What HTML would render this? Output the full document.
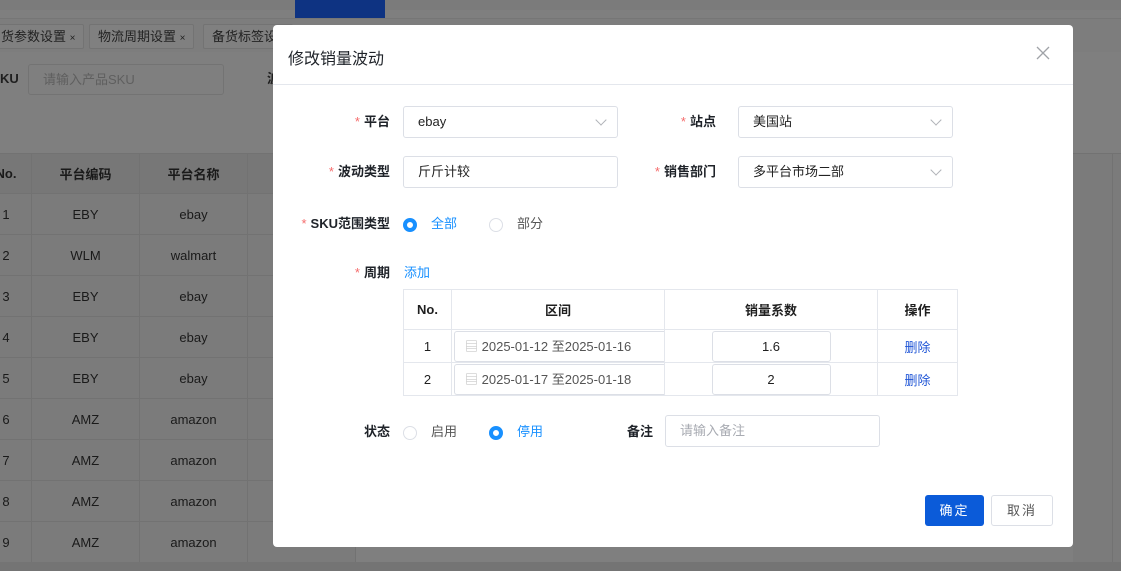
<!DOCTYPE html>
<html><head><meta charset="utf-8">
<style>
*{box-sizing:border-box;margin:0;padding:0}
body{width:1121px;height:571px;overflow:hidden;position:relative;background:#7f7f7f;font-family:"Liberation Sans","Noto Sans CJK SC",sans-serif;font-size:13px;color:#1f1f1f}
.a{position:absolute}
.bgtab{position:absolute;top:24px;height:25px;border:1px solid #737373;background:#808080;color:#222;font-size:13px;line-height:23px;padding:0 8px;border-radius:2px}
table.bg{position:absolute;left:-20px;top:153px;border-collapse:collapse;background:#7b7b7b}
table.bg td{border:1px solid #727272;height:41px;text-align:center;color:#1a1a1a;font-size:13px}
table.bg tr:first-child td{font-weight:bold;height:40px;background:#777}
.modal{position:absolute;left:273px;top:25px;width:800px;height:522px;background:#fff;border-radius:4px}
.lbl{position:absolute;text-align:right;font-weight:bold;font-size:13px;color:#1f2329;line-height:32px}
.lbl i{color:#f56c6c;font-style:normal;margin-right:4px;font-weight:normal}
.inp{position:absolute;height:32px;border:1px solid #dcdfe6;border-radius:3px;line-height:30px;padding-left:14px;font-size:13px;color:#222}
.arr{position:absolute;right:12px;top:9px;width:8px;height:8px;border-right:1px solid #b0b3b8;border-bottom:1px solid #b0b3b8;transform:rotate(45deg)}
.radio{position:absolute;width:14px;height:14px;border-radius:50%;border:1px solid #dcdfe6}
.radio.on{border:4px solid #1890ff;background:#fff}
.rt{position:absolute;font-size:13px;line-height:16px}
table.inner{position:absolute;left:403px;top:289px;border-collapse:collapse;width:555px}
table.inner td{border:1px solid #e4e7ed;text-align:center;font-size:13px}
</style></head><body>
<div class="a" style="left:0;top:0;width:1121px;height:10px;background:#7b7b7b"></div>
<div class="a" style="left:295px;top:0;width:90px;height:18px;background:#0e3382"></div>
<div class="a" style="left:0;top:18px;width:1121px;height:34px;background:#7d7d7d;border-top:1px solid #767676"></div>
<div class="bgtab" style="left:-8px">货参数设置 <span style="font-size:10px">×</span></div>
<div class="bgtab" style="left:89px">物流周期设置 <span style="font-size:10px">×</span></div>
<div class="bgtab" style="left:203px;width:90px">备货标签设</div>
<div class="a" style="left:0;top:64px;font-weight:bold;line-height:30px">KU</div>
<div class="a" style="left:28px;top:64px;width:196px;height:31px;border:1px solid #737373;border-radius:3px;color:#5f5f5f;line-height:29px;padding-left:14px">请输入产品SKU</div>
<div class="a" style="left:267px;top:64px;font-weight:bold;line-height:30px">波</div>
<table class="bg">
<tr><td style="width:51px">No.</td><td style="width:108px">平台编码</td><td style="width:108px">平台名称</td><td style="width:108px"></td></tr>
<tr><td>1</td><td>EBY</td><td>ebay</td><td></td></tr>
<tr><td>2</td><td>WLM</td><td>walmart</td><td></td></tr>
<tr><td>3</td><td>EBY</td><td>ebay</td><td></td></tr>
<tr><td>4</td><td>EBY</td><td>ebay</td><td></td></tr>
<tr><td>5</td><td>EBY</td><td>ebay</td><td></td></tr>
<tr><td>6</td><td>AMZ</td><td>amazon</td><td></td></tr>
<tr><td>7</td><td>AMZ</td><td>amazon</td><td></td></tr>
<tr><td>8</td><td>AMZ</td><td>amazon</td><td></td></tr>
<tr><td>9</td><td>AMZ</td><td>amazon</td><td></td></tr>
</table>
<div class="a" style="left:1073px;top:153px;width:48px;height:410px;background:#7b7b7b;border-top:1px solid #727272"></div>
<div class="a" style="left:1112px;top:153px;width:1px;height:410px;background:#727272"></div>
<div class="a" style="left:0;top:562px;width:1121px;height:9px;background:#747474"></div>

<div class="modal">
<div class="a" style="left:15px;top:20px;font-size:16px;color:#1f2329">修改销量波动</div>
<div class="a" style="left:762px;top:20px;width:16px;height:16px">
<svg width="16" height="16"><path d="M2 2L14 14M14 2L2 14" stroke="#a0a3a8" stroke-width="1.3"/></svg></div>
<div class="a" style="left:0;top:59px;width:800px;height:1px;background:#e4e7ed"></div>

<div class="lbl" style="left:0;top:81px;width:117px"><i>*</i>平台</div>
<div class="inp" style="left:130px;top:81px;width:215px">ebay<span class="arr"></span></div>
<div class="lbl" style="left:300px;top:81px;width:143px"><i>*</i>站点</div>
<div class="inp" style="left:465px;top:81px;width:215px">美国站<span class="arr"></span></div>

<div class="lbl" style="left:0;top:131px;width:117px"><i>*</i>波动类型</div>
<div class="inp" style="left:130px;top:131px;width:215px">斤斤计较</div>
<div class="lbl" style="left:300px;top:131px;width:143px"><i>*</i>销售部门</div>
<div class="inp" style="left:465px;top:131px;width:215px">多平台市场二部<span class="arr"></span></div>

<div class="lbl" style="left:0;top:183px;width:117px"><i>*</i>SKU范围类型</div>
<div class="radio on" style="left:130px;top:193px"></div>
<div class="rt" style="left:158px;top:191px;color:#1890ff">全部</div>
<div class="radio" style="left:216px;top:193px"></div>
<div class="rt" style="left:244px;top:191px;color:#555">部分</div>

<div class="lbl" style="left:0;top:232px;width:117px"><i>*</i>周期</div>
<div class="rt" style="left:131px;top:240px;color:#1890ff">添加</div>

<div class="lbl" style="left:0;top:391px;width:117px">状态</div>
<div class="radio" style="left:130px;top:401px"></div>
<div class="rt" style="left:158px;top:399px;color:#555">启用</div>
<div class="radio on" style="left:216px;top:401px"></div>
<div class="rt" style="left:244px;top:399px;color:#1890ff">停用</div>
<div class="lbl" style="left:300px;top:391px;width:80px">备注</div>
<div class="inp" style="left:392px;top:390px;width:215px;color:#a8abb2">请输入备注</div>

<div class="a" style="left:652px;top:470px;width:59px;height:31px;background:#0b5bd9;border-radius:3px;color:#fff;text-align:center;line-height:31px;letter-spacing:2px">确定</div>
<div class="a" style="left:718px;top:470px;width:62px;height:31px;border:1px solid #dcdfe6;border-radius:3px;color:#555;text-align:center;line-height:29px;letter-spacing:2px">取消</div>
</div>

<table class="inner">
<tr style="height:40px;font-weight:bold"><td style="width:48px;font-weight:bold">No.</td><td style="width:213px;font-weight:bold">区间</td><td style="width:213px;font-weight:bold">销量系数</td><td style="font-weight:bold">操作</td></tr>
<tr style="height:33px"><td>1</td><td style="padding:0"><div style="margin:0 0 0 2px;height:31px;border:1px solid #dcdfe6;border-right:none;border-radius:3px 0 0 3px;text-align:left;padding-left:10px;line-height:29px;color:#555"><span style="color:#bbb">▤</span> 2025-01-12 至2025-01-16</div></td><td><div style="margin:0 auto;width:119px;height:31px;border:1px solid #dcdfe6;border-radius:3px;line-height:29px">1.6</div></td><td style="color:#1f55d6">删除</td></tr>
<tr style="height:33px"><td>2</td><td style="padding:0"><div style="margin:0 0 0 2px;height:31px;border:1px solid #dcdfe6;border-right:none;border-radius:3px 0 0 3px;text-align:left;padding-left:10px;line-height:29px;color:#555"><span style="color:#bbb">▤</span> 2025-01-17 至2025-01-18</div></td><td><div style="margin:0 auto;width:119px;height:31px;border:1px solid #dcdfe6;border-radius:3px;line-height:29px">2</div></td><td style="color:#1f55d6">删除</td></tr>
</table>
</body></html>
